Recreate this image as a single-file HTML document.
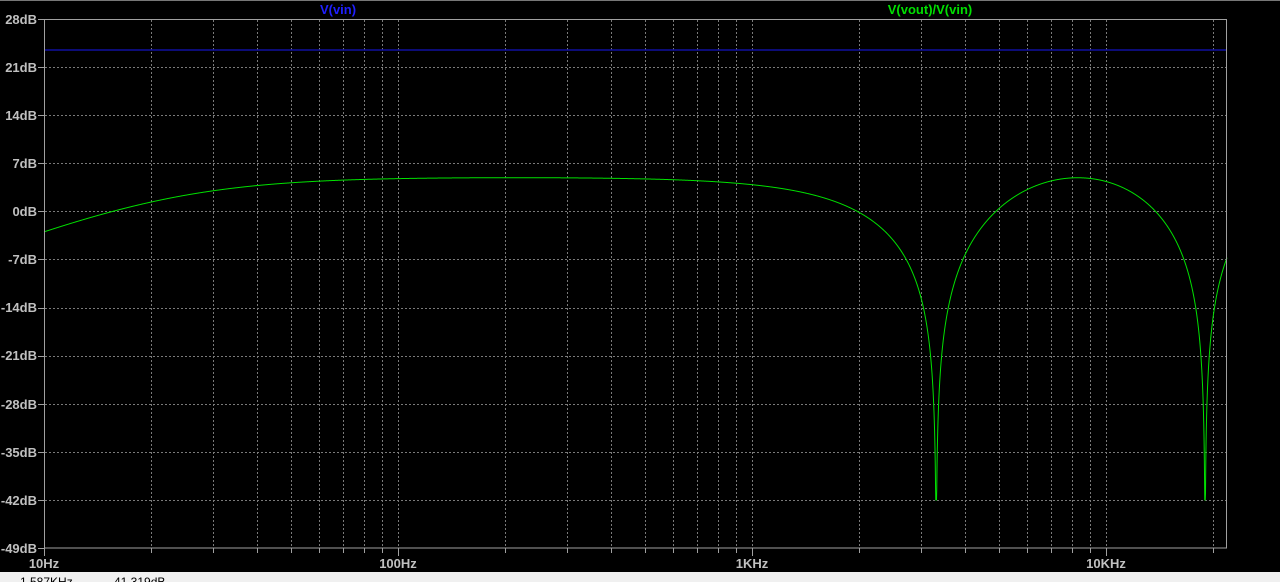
<!DOCTYPE html>
<html><head><meta charset="utf-8"><style>
html,body{margin:0;padding:0;background:#000;}
body{width:1280px;height:582px;overflow:hidden;position:relative;font-family:"Liberation Sans",sans-serif;}
svg{position:absolute;left:0;top:0;}
.status{position:absolute;left:0;top:572px;width:1280px;height:10px;background:#f0f0f0;overflow:hidden;}
.status span{position:absolute;top:3px;font-size:12px;color:#000;}
</style></head><body>
<svg id="s" width="1280" height="572" viewBox="0 0 1280 572">
<rect x="0" y="0" width="1280" height="572" fill="#000"/>
<line x1="0" y1="0.5" x2="1280" y2="0.5" stroke="#777"/>
<g id="grid" stroke="#7a7a7a" stroke-width="1" stroke-dasharray="2,2"></g>
<g id="ticks" stroke="#a0a0a0" stroke-width="1"></g>
<line x1="44" y1="50" x2="1227" y2="50" stroke="#1010a0" stroke-width="1.5"/>
<path id="curve" fill="none" stroke="#00e000" stroke-width="1"/>
<rect x="44.5" y="19.5" width="1182" height="528.5" fill="none" stroke="#a0a0a0"/>
<g font-size="13" font-weight="bold" fill="#c0c0c0" text-anchor="end">
<text x="37" y="24">28dB</text><text x="37" y="72">21dB</text><text x="37" y="120">14dB</text>
<text x="37" y="168">7dB</text><text x="37" y="216">0dB</text><text x="37" y="264">-7dB</text>
<text x="37" y="312">-14dB</text><text x="37" y="360">-21dB</text><text x="37" y="409">-28dB</text>
<text x="37" y="457">-35dB</text><text x="37" y="505">-42dB</text><text x="37" y="553">-49dB</text>
</g>
<g font-size="13" font-weight="bold" fill="#c0c0c0" text-anchor="middle">
<text x="44" y="568">10Hz</text><text x="398" y="568">100Hz</text><text x="752" y="568">1KHz</text><text x="1106" y="568">10KHz</text>
</g>
<text x="338" y="14" font-size="13" font-weight="bold" fill="#2020ff" text-anchor="middle">V(vin)</text>
<text x="930" y="14" font-size="13" font-weight="bold" fill="#00e000" text-anchor="middle">V(vout)/V(vin)</text>
</svg>
<div class="status"><span style="left:20px">1.587KHz</span><span style="left:110px">-41.319dB</span></div>
<script>
var ns="http://www.w3.org/2000/svg",g=document.getElementById('grid'),t=document.getElementById('ticks');
function ln(p,x1,y1,x2,y2){var l=document.createElementNS(ns,'line');l.setAttribute('x1',x1);l.setAttribute('y1',y1);l.setAttribute('x2',x2);l.setAttribute('y2',y2);p.appendChild(l);}
var D=354;
for(var d=0;d<4;d++){for(var k=1;k<=10;k++){var x=44+D*(d+Math.log10(k));x=Math.round(x)+0.5;if(x>=1227)continue;if(x>45)ln(g,x,20,x,548);ln(t,x,548,x,k==1||k==10?556:553);}}
for(var i=0;i<12;i++){var y=Math.round(19+i*529/11)+0.5;if(i>0&&i<11)ln(g,45,y,1227,y);ln(t,38,y,44,y);}
var f1=3313,f2=19050,fp=4600,fc=23,pts=[];
for(var x=44;x<=1227;x+=0.25){var f=10*Math.pow(10,(x-44)/D);
var N=Math.abs((1-Math.pow(f/f1,2))*(1-Math.pow(f/f2,2)));
var Dn=1+Math.pow(f/fp,2)+Math.pow(f/8600,4);
var hp=(f/fc)/Math.sqrt(1+Math.pow(f/fc,2));
var G=5+20*Math.log10(Math.max(N/Dn*hp,1e-9))+1.7*f*f/(f*f+f1*f1);if(G<-42)G=-42;
var y=19+(28-G)*529/77;pts.push(x.toFixed(2)+','+y.toFixed(2));}
document.getElementById('curve').setAttribute('d','M'+pts.join('L'));
</script>
</body></html>
